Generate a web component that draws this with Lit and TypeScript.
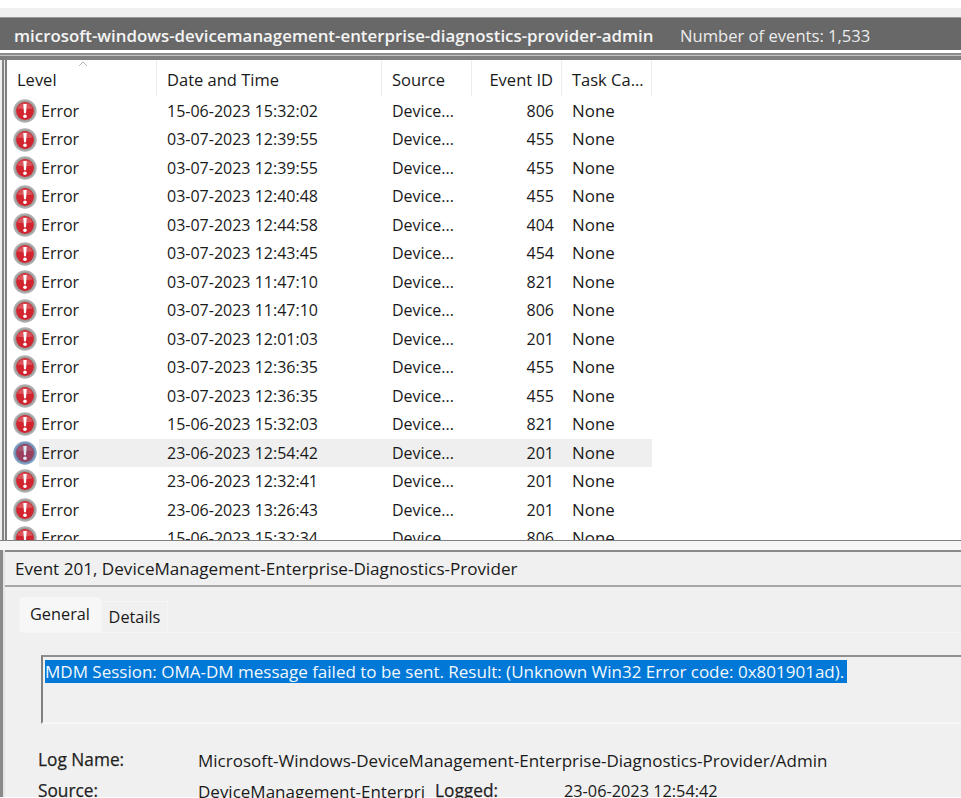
import { LitElement, html, css, svg } from "lit";
import { customElement } from "lit/decorators.js";

const rows: [string, string][] = [
  ["15-06-2023 15:32:02", "806"],
  ["03-07-2023 12:39:55", "455"],
  ["03-07-2023 12:39:55", "455"],
  ["03-07-2023 12:40:48", "455"],
  ["03-07-2023 12:44:58", "404"],
  ["03-07-2023 12:43:45", "454"],
  ["03-07-2023 11:47:10", "821"],
  ["03-07-2023 11:47:10", "806"],
  ["03-07-2023 12:01:03", "201"],
  ["03-07-2023 12:36:35", "455"],
  ["03-07-2023 12:36:35", "455"],
  ["15-06-2023 15:32:03", "821"],
  ["23-06-2023 12:54:42", "201"],
  ["23-06-2023 12:32:41", "201"],
  ["23-06-2023 13:26:43", "201"],
  ["15-06-2023 15:32:34", "806"],
];

const icon = (sel: boolean) => html`<svg class="ico" viewBox="0 0 24 24" width="24" height="24">
  ${svg`
    <circle cx="12" cy="12" r="11.7" fill="${sel ? "#86a2c2" : "#b0b0b0"}"/>
    <circle cx="12" cy="12" r="10.2" fill="${sel ? "#6a89ae" : "#9a9a9a"}"/>
    <circle cx="12" cy="12" r="8.9" fill="${sel ? "#9a3f5e" : "#d2242e"}"/>
    <path d="M4.2 9.5a8.4 8.4 0 0 1 15.6 0a20 8 0 0 1-15.6 0z" fill="#fff" opacity="${sel ? 0.12 : 0.22}"/>
    <path d="M10.3 5h3.4l-.7 9.2h-2z" fill="${sel ? "#dfe6f2" : "#fff"}"/>
    <circle cx="12" cy="17.2" r="1.8" fill="${sel ? "#dfe6f2" : "#fff"}"/>
  `}
</svg>`;

@customElement("app-root")
export class AppRoot extends LitElement {
  static styles = css`
    :host {
      display: block;
      width: 961px;
      height: 798px;
      overflow: hidden;
      background: #fff;
      font-family: "Open Sans", "Noto Sans", "Liberation Sans", sans-serif;
      font-size: 16px;
      color: #1a1a1a;
    }
    .topgap { height: 8px; background: #fff; }
    .strip { height: 9px; background: #f0f0f0; }
    .title {
      height: 33px;
      box-sizing: border-box;
      padding: 3px 0 0 14px;
      background: #686868;
      border-top: 1px solid #9a9a9a;
      display: flex;
      align-items: center;
      color: #f4f4f4;
      white-space: nowrap;
    }
    .title b { font-weight: 600; font-size: 16.85px; width: 666px; }
    .title span { font-size: 16.6px; color: #ececec; }
    .rule {
      height: 7px;
      margin-top: 3px;
      background: linear-gradient(#8c8c8c 0 2px, #c4c4c4 2px 3px, #7f7f7f 3px 7px);
    }
    .listwrap {
      height: 480px;
      display: flex;
      overflow: hidden;
      background: #fff;
    }
    .leftedge {
      width: 7px;
      flex: none;
      background: linear-gradient(90deg, #f0f0f0 0 2px, #858585 2px 4px, #e8e8e8 4px 5px, #7f7f7f 5px 7px);
    }
    .list { width: 645px; position: relative; }
    .head, .row {
      display: grid;
      grid-template-columns: 150px 225px 90px 90px 90px;
      white-space: nowrap;
    }
    .head { height: 37px; align-items: start; font-size: 16.5px; }
    .head > div {
      height: 36px;
      line-height: 39px;
      padding-left: 10px;
      border-right: 1px solid #ececec;
      box-sizing: border-box;
    }
    .head > .num { text-align: right; padding: 0 8px 0 0; }
    .row > .num { text-align: right; padding: 0 8px 0 0; }
    .sort { position: absolute; left: 71px; top: 1px; }
    .row { height: 28.47px; line-height: 28.47px; font-size: 16px; }
    .row > div { padding-left: 10px; }
    .row > .lvl { padding-left: 0; display: flex; align-items: center; }
    .row > .lvl .ico { margin: 0 2px 0 6px; flex: none; }
    .row > .lvl span { padding-left: 2px; flex: 1; }
    .row > .none { font-size: 16.9px; }
    .row.sel > div:not(.lvl) { background: #efefef; }
    .row.sel > .lvl span { background: #efefef; height: 100%; }
    .divider1 {
      height: 9px;
      background: #f6f6f6;
      border-top: 1px solid #808080;
    }
    .pane { display: flex; height: 247px; }
    .paneedge {
      width: 5px;
      flex: none;
      background: linear-gradient(90deg, #8a8a8a 0 3px, #e4e4e4 3px 5px);
    }
    .panebody { flex: 1; background: #f0f0f0; min-width: 0; }
    .panetop { height: 2px; background: #8a8a8a; }
    .evhead {
      height: 33px;
      line-height: 34px;
      padding-left: 10px;
      font-size: 17.1px;
      white-space: nowrap;
    }
    .rule2 { height: 2px; background: #a6a6a6; }
    .tabs {
      display: flex;
      align-items: flex-end;
      height: 45px;
      padding-left: 14px;
    }
    .tab {
      box-sizing: border-box;
      font-size: 16.3px;
      white-space: nowrap;
      text-align: center;
      border: 1px solid #f5f5f5;
      border-bottom: none;
    }
    .tab.on { width: 82px; height: 35px; line-height: 33px; background: #f7f7f7; }
    .tab.off { width: 67px; height: 31px; line-height: 31px; background: #f0f0f0; }
    .tabpanel {
      margin-left: 19px;
      border-top: 1px solid #f6f6f6;
      padding: 22px 0 0 17px;
    }
    .msgbox {
      height: 69px;
      box-sizing: border-box;
      border-top: 2px solid #8f8f8f;
      border-left: 2px solid #808080;
      border-bottom: 2px solid #f7f7f7;
      padding: 3px 0 0 2px;
    }
    .msg {
      display: inline-block;
      height: 23px;
      line-height: 24px;
      background: #0078d7;
      color: #f4f8fc;
      font-size: 17px;
      white-space: nowrap;
      width: 802px;
    }
    .props {
      display: grid;
      grid-template-columns: 160px 237px 129px 1fr;
      grid-auto-rows: 31px;
      margin: 21px 0 0 -3px;
      white-space: nowrap;
      font-size: 17px;
      line-height: 31px;
    }
    .props .k { -webkit-text-stroke: 0.25px #333; line-height: 29px; font-size: 17.3px; }
    .props .v { font-size: 16.3px; }
    .span3 { grid-column: 2 / 5; }
    .clip { overflow: hidden; }
  `;

  render() {
    return html`
      <div class="topgap"></div>
      <div class="strip"></div>
      <div class="title">
        <b>microsoft-windows-devicemanagement-enterprise-diagnostics-provider-admin</b>
        <span>Number of events: 1,533</span>
      </div>
      <div class="rule"></div>
      <div class="listwrap">
        <div class="leftedge"></div>
        <div class="list">
          <svg class="sort" width="10" height="6" viewBox="0 0 10 6">
            <path d="M1 5l4-4 4 4" fill="none" stroke="#b5b5b5" stroke-width="1"/>
          </svg>
          <div class="head">
            <div>Level</div>
            <div>Date and Time</div>
            <div>Source</div>
            <div class="num">Event ID</div>
            <div>Task Ca...</div>
          </div>
          ${rows.map(
            ([d, id], i) => html`<div class="row ${i === 12 ? "sel" : ""}">
              <div class="lvl">${icon(i === 12)}<span>Error</span></div>
              <div>${d}</div>
              <div>Device...</div>
              <div class="num">${id}</div>
              <div class="none">None</div>
            </div>`
          )}
        </div>
      </div>
      <div class="divider1"></div>
      <div class="pane">
        <div class="paneedge"></div>
        <div class="panebody">
          <div class="panetop"></div>
          <div class="evhead">Event 201, DeviceManagement-Enterprise-Diagnostics-Provider</div>
          <div class="rule2"></div>
          <div class="tabs">
            <div class="tab on">General</div>
            <div class="tab off">Details</div>
          </div>
          <div class="tabpanel">
            <div class="msgbox">
              <span class="msg">MDM Session: OMA-DM message failed to be sent. Result: (Unknown Win32 Error code: 0x801901ad).</span>
            </div>
            <div class="props">
              <div class="k">Log Name:</div>
              <div class="span3">Microsoft-Windows-DeviceManagement-Enterprise-Diagnostics-Provider/Admin</div>
              <div class="k">Source:</div>
              <div class="clip">DeviceManagement-Enterpri</div>
              <div class="k">Logged:</div>
              <div class="v">23-06-2023 12:54:42</div>
            </div>
          </div>
        </div>
      </div>
    `;
  }
}
